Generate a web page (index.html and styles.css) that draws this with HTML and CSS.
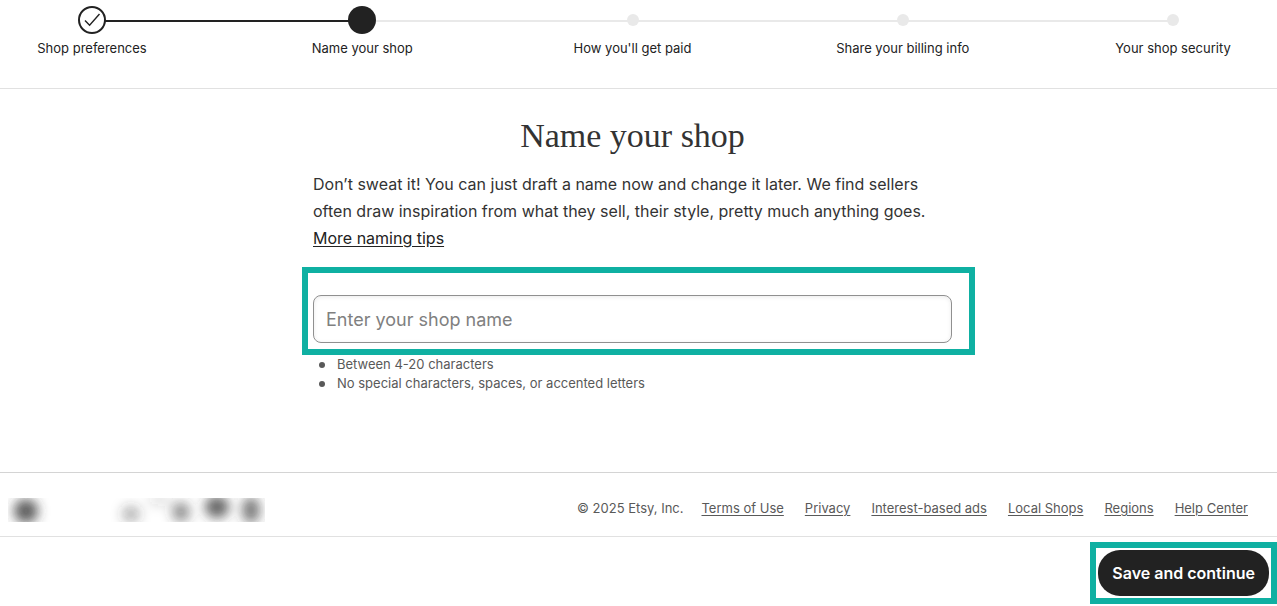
FILE: index.html
```html
<!DOCTYPE html>
<html lang="en">
<head>
<meta charset="utf-8">
<meta name="viewport" content="width=device-width, initial-scale=1">
<title>Name your shop</title>
<link rel="stylesheet" href="styles.css">
</head>
<body>
<header class="header">
  <ol class="steps">
    <li class="step">
      <span class="step-marker">
        <svg class="check" viewBox="0 0 28 28" aria-hidden="true"><circle cx="14" cy="14" r="13"/><path d="M7 14.5l4.6 4.8L21.5 8"/></svg>
      </span>
      <span class="step-label">Shop preferences</span>
    </li>
    <li class="step" aria-current="step">
      <span class="step-marker"><span class="dot dot-current"></span></span>
      <span class="step-label">Name your shop</span>
    </li>
    <li class="step">
      <span class="step-marker"><span class="dot"></span></span>
      <span class="step-label">How you'll get paid</span>
    </li>
    <li class="step">
      <span class="step-marker"><span class="dot"></span></span>
      <span class="step-label">Share your billing info</span>
    </li>
    <li class="step">
      <span class="step-marker"><span class="dot"></span></span>
      <span class="step-label">Your shop security</span>
    </li>
  </ol>
</header>
<main class="main">
  <div class="column">
    <h1 class="title">Name your shop</h1>
    <p class="intro">Don’t sweat it! You can just draft a name now and change it later. We find sellers often draw inspiration from what they sell, their style, pretty much anything goes. <a class="tips" href="#">More naming tips</a></p>
    <div class="field">
      <input class="name-input" type="text" placeholder="Enter your shop name" aria-label="Shop name" aria-describedby="rules">
    </div>
    <ul class="rules" id="rules">
      <li>Between 4-20 characters</li>
      <li>No special characters, spaces, or accented letters</li>
    </ul>
  </div>
</main>
<footer class="footer">
  <svg class="smudge" viewBox="0 0 257 24" aria-hidden="true">
    <defs><filter id="soft" x="-200%" y="-200%" width="500%" height="500%"><feGaussianBlur stdDeviation="6"/></filter></defs>
    <g fill="#333" filter="url(#soft)">
      <ellipse cx="18" cy="13" rx="12" ry="12" opacity=".8"/>
      <ellipse cx="123" cy="16" rx="9" ry="8" opacity=".38"/>
      <ellipse cx="152" cy="2" rx="12" ry="6" opacity=".14"/>
      <ellipse cx="173" cy="14" rx="9" ry="10" opacity=".55"/>
      <ellipse cx="209" cy="9" rx="12" ry="11" opacity=".75"/>
      <ellipse cx="243" cy="12" rx="9" ry="13" opacity=".65"/>
    </g>
  </svg>
  <nav class="legal">
    <span class="copyright">© 2025 Etsy, Inc.</span>
    <a href="#">Terms of Use</a>
    <a href="#">Privacy</a>
    <a href="#">Interest-based ads</a>
    <a href="#">Local Shops</a>
    <a href="#">Regions</a>
    <a href="#">Help Center</a>
  </nav>
</footer>
<div class="actions">
  <div class="save-frame">
    <button class="save" type="button">Save and continue</button>
  </div>
</div>
</body>
</html>
```
FILE: styles.css
```css
* { box-sizing: border-box; }
body {
  margin: 0;
  background: #fff;
  color: #222;
  font-family: Inter, "Liberation Sans", sans-serif;
  font-size: 13px;
  line-height: 20px;
}
.header {
  padding: 6px 36px 30px 24px;
  border-bottom: 1px solid #e1e1e1;
}
.steps {
  position: relative;
  display: flex;
  justify-content: space-between;
  margin: 0;
  padding: 0;
  list-style: none;
}
.steps::before {
  content: "";
  position: absolute;
  z-index: -1;
  top: 14px;
  left: 68px;
  right: 68px;
  height: 2px;
  background: linear-gradient(to right, #222 25%, #e9e9e9 25%);
}
.step {
  display: flex;
  flex-direction: column;
  align-items: center;
  gap: 4px;
  width: 136px;
  white-space: nowrap;
}
.step-marker {
  display: flex;
  align-items: center;
  justify-content: center;
  height: 28px;
}
.check {
  width: 28px;
  height: 28px;
  fill: #fff;
  stroke: #222;
  stroke-width: 2;
}
.check path { fill: none; stroke-width: 1.4; }
.dot {
  width: 12px;
  height: 12px;
  border-radius: 50%;
  background: #e9e9e9;
}
.dot-current { width: 28px; height: 28px; background: #222; }

.main { padding: 27px 12px 79px 0; }
.column { max-width: 639px; margin: 0 auto; }
.title {
  margin: 0 0 15px;
  color: #333;
  font-family: "Liberation Serif", serif;
  font-size: 34px;
  font-weight: 400;
  line-height: 40px;
  text-align: center;
}
.intro {
  margin: 0 0 15px;
  color: #333;
  font-size: 16px;
  font-weight: 400;
  line-height: 27px;
}
.tips { display: inline-block; color: #222; text-underline-offset: 2px; }
.field { position: relative; padding: 28px 0 12px; }
.field::before {
  content: "";
  position: absolute;
  inset: 0 -23px 0 -11px;
  border: 6px solid #0fb0a2;
  pointer-events: none;
}
.name-input {
  display: block;
  width: 100%;
  height: 48px;
  padding: 0 12px;
  border: 1px solid #909090;
  border-radius: 8px;
  background: #fff;
  box-shadow: inset 0 1px 4px rgba(34, 34, 34, 0.09);
  color: #222;
  font-family: inherit;
  font-size: 18px;
  font-weight: 400;
}
.name-input::placeholder { color: #808080; opacity: 1; }
.rules {
  margin: 0;
  padding: 0;
  color: #595959;
  line-height: 19px;
  list-style: none;
}
.rules li { display: flex; align-items: center; gap: 12px; padding-left: 6px; }
.rules li::before {
  content: "";
  width: 6px;
  height: 6px;
  border-radius: 50%;
  background: #595959;
}

.footer {
  display: flex;
  align-items: flex-start;
  justify-content: space-between;
  padding: 25px 29px 14px 8px;
  border-top: 1px solid #d4d4d4;
  border-bottom: 1px solid #e1e1e1;
  color: #595959;
}
.smudge {
  width: 257px;
  height: 24px;
  overflow: hidden;
}
.legal { display: flex; gap: 21px; line-height: 21px; }
.legal a { color: inherit; text-underline-offset: 2px; }
.copyright { margin-right: -3px; }

.actions { display: flex; justify-content: flex-end; padding-top: 5px; }
.save-frame { padding: 2px; border: 6px solid #0fb0a2; }
.save {
  display: block;
  height: 46px;
  padding: 0 14px;
  border: 0;
  border-radius: 22px;
  background: #222;
  color: #fff;
  font-family: inherit;
  font-size: 16px;
  font-weight: 600;
}
```
